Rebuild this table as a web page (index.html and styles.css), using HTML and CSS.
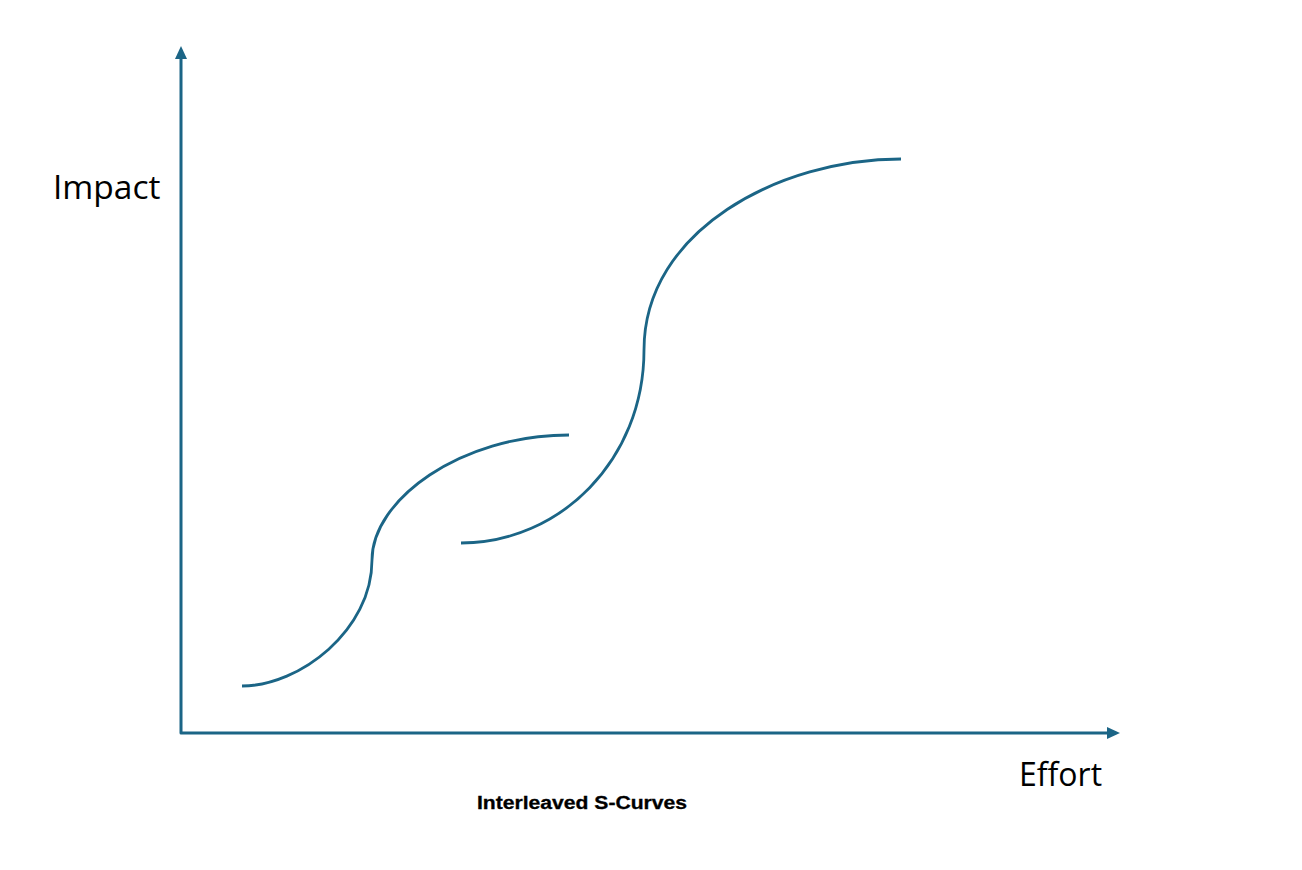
FILE: index.html
```html
<!DOCTYPE html>
<html lang="en">
<head>
<meta charset="utf-8">
<title>Interleaved S-Curves</title>
<link rel="stylesheet" href="styles.css">
</head>
<body>
<figure class="chart">
  <svg class="chart-svg" width="1302" height="870" viewBox="0 0 1302 870" xmlns="http://www.w3.org/2000/svg">
    <path class="axis" d="M181 58 V733 H1108"/>
    <polygon class="arrow" points="181,46 175,59 187,59"/>
    <polygon class="arrow" points="1120,733 1107,727 1107,739"/>
    <path class="curve" d="M242 686 C300 686 372 630 372 560 C372 500 460 435 569 435"/>
    <path class="curve" d="M461 543 C560 543 644 460 644 350 C644 230 780 159 901 159"/>
    <text class="axis-label" x="53" y="199">Impact</text>
    <text class="axis-label axis-label-x" x="1019" y="786">Effort</text>
    <text class="caption" x="477" y="809" textLength="210" lengthAdjust="spacingAndGlyphs">Interleaved S-Curves</text>
  </svg>
</figure>
</body>
</html>
```
FILE: styles.css
```css
html, body {
  margin: 0;
  padding: 0;
  background: #ffffff;
}
.chart {
  margin: 0;
  width: 1302px;
  height: 870px;
  display: block;
}
.chart-svg {
  display: block;
}
.axis {
  fill: none;
  stroke: #1b6586;
  stroke-width: 3;
  stroke-linejoin: round;
}
.arrow {
  fill: #1b6586;
}
.curve {
  fill: none;
  stroke: #1b6586;
  stroke-width: 2.8;
}
.axis-label {
  font-family: "Open Sans", "Liberation Sans", sans-serif;
  font-size: 33.5px;
  fill: #000000;
}
.axis-label-x {
  font-size: 32px;
}
.caption {
  font-family: "Liberation Sans", Arial, sans-serif;
  font-weight: bold;
  font-size: 17.5px;
  fill: #000000;
  stroke: #000000;
  stroke-width: 0.3;
}
```
